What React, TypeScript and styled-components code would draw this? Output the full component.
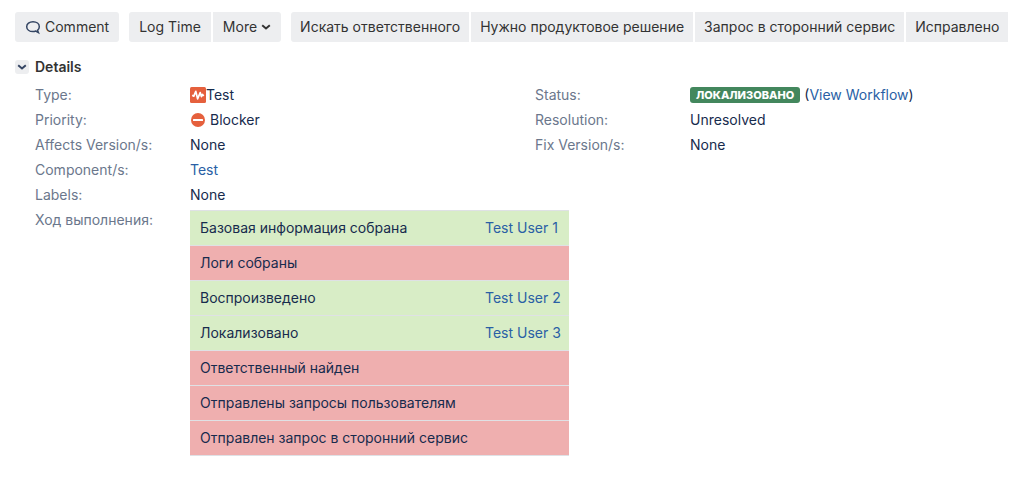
import React from "react";
import styled, { createGlobalStyle } from "styled-components";

const Global = createGlobalStyle`
  * { box-sizing: border-box; }
  body {
    margin: 0;
    background: #fff;
    color: #172b4d;
    font: 14px/20px Inter, "Liberation Sans", sans-serif;
  }
`;

const Page = styled.main`
  padding: 12px 0 24px 15px;
  overflow: hidden;
`;
const Toolbar = styled.div`
  display: flex;
  gap: 10px;
`;
const ButtonGroup = styled.div<{ $open?: boolean }>`
  display: flex;
  flex: none;
  gap: 2px;
  border-radius: ${(p) => (p.$open ? "3px 0 0 3px" : "3px")};
  overflow: hidden;
`;
const ToolButton = styled.button<{ $compact?: boolean }>`
  display: flex;
  align-items: center;
  gap: 4px;
  height: 30px;
  padding: 0 ${(p) => (p.$compact ? 9 : 10)}px;
  border: 0;
  background: #edeef0;
  color: #333;
  font: inherit;
  white-space: nowrap;
`;
const SectionHead = styled.header`
  display: flex;
  align-items: center;
  gap: 6px;
  margin-top: 15px;
`;
const Toggle = styled.button`
  display: flex;
  align-items: center;
  justify-content: center;
  width: 14px;
  height: 14px;
  padding: 0;
  border: 0;
  border-radius: 3px;
  background: #edeef0;
  color: #344563;
`;
const Title = styled.h2`
  margin: 0;
  color: #333;
  font-size: 14px;
  font-weight: 600;
`;
const Columns = styled.div`
  display: grid;
  grid-template-columns: minmax(0, 20fr) minmax(0, 19fr);
  padding-left: 20px;
  margin-top: 8px;
`;
const Fields = styled.dl`
  margin: 0;
`;
const Field = styled.div`
  display: grid;
  grid-template-columns: 155px minmax(0, 1fr);
  margin-bottom: 5px;
`;
const Label = styled.dt`
  color: #6b778c;
`;
const Value = styled.dd<{ $gap?: number }>`
  display: flex;
  align-items: center;
  gap: ${(p) => p.$gap ?? 0}px;
  margin: 0;
  white-space: nowrap;
`;
const Link = styled.a`
  color: #2a5fa5;
  text-decoration: none;
`;
const Lozenge = styled.span`
  padding: 0 6px;
  border-radius: 3px;
  background: #43875d;
  color: #fff;
  font-size: 11px;
  font-weight: 800;
  line-height: 16px;
`;
const Progress = styled.table`
  flex: none;
  width: 379px;
  table-layout: fixed;
  border-collapse: collapse;
`;
const Step = styled.tr<{ $done: boolean }>`
  height: 35px;
  background: ${(p) => (p.$done ? "#d8edc6" : "#efafaf")};
`;
const Cell = styled.td`
  padding: 7px 0 7px 10px;
  border-top: 1px solid #dfe1e5;
  border-bottom: 1px solid #dfe1e5;
`;

const Chevron = ({ size }: { size: number }) => (
  <svg width={size} height={size} viewBox="0 0 10 10" fill="none" stroke="currentColor" strokeWidth="2" aria-hidden="true">
    <path d="M1.200 3.200 5 6.400 8.800 3.200" />
  </svg>
);
const CommentIcon = () => (
  <svg width="16" height="16" viewBox="0 0 16 16" fill="none" stroke="#344563" strokeWidth="1.5" aria-hidden="true">
    <path d="M10.700 12C9.900 12.400 9 12.600 8 12.600 4.400 12.600 1.700 10.500 1.700 7.700S4.400 2.800 8 2.800s6.300 2.100 6.300 4.900c0 1.500-.7 2.700-1.800 3.600l.9 2.300z" />
  </svg>
);
const TestIcon = () => (
  <svg width="16" height="16" viewBox="0 0 16 16" aria-hidden="true">
    <rect width="16" height="16" rx="1.500" fill="#e5603d" />
    <path d="M2.200 8.200 3.800 9.200 5.800 4.400 7.600 11.800 10.200 5.600 11.400 9.600 12.400 7.400 13.700 9" fill="none" stroke="#fff" strokeWidth="1.700" strokeLinejoin="round" />
  </svg>
);
const BlockerIcon = () => (
  <svg width="16" height="16" viewBox="0 0 16 16" aria-hidden="true">
    <circle cx="8" cy="8" r="7" fill="#e5603d" />
    <rect x="3" y="7" width="10" height="2" rx=".5" fill="#fff" />
  </svg>
);

const transitions = ["Искать ответственного", "Нужно продуктовое решение", "Запрос в сторонний сервис", "Исправлено"];
const steps = [
  { name: "Базовая информация собрана", user: "Test User 1" },
  { name: "Логи собраны" },
  { name: "Воспроизведено", user: "Test User 2" },
  { name: "Локализовано", user: "Test User 3" },
  { name: "Ответственный найден" },
  { name: "Отправлены запросы пользователям" },
  { name: "Отправлен запрос в сторонний сервис" },
];

export default function App() {
  return (
    <Page>
      <Global />
      <Toolbar>
        <ButtonGroup>
          <ToolButton><CommentIcon />Comment</ToolButton>
        </ButtonGroup>
        <ButtonGroup>
          <ToolButton>Log Time</ToolButton>
          <ToolButton>More <Chevron size={10} /></ToolButton>
        </ButtonGroup>
        <ButtonGroup $open>
          {transitions.map((t) => <ToolButton key={t} $compact>{t}</ToolButton>)}
        </ButtonGroup>
      </Toolbar>
      <section>
        <SectionHead>
          <Toggle aria-label="Toggle details"><Chevron size={10} /></Toggle>
          <Title>Details</Title>
        </SectionHead>
        <Columns>
          <Fields>
            <Field><Label>Type:</Label><Value><TestIcon />Test</Value></Field>
            <Field><Label>Priority:</Label><Value $gap={4}><BlockerIcon />Blocker</Value></Field>
            <Field><Label>Affects Version/s:</Label><Value>None</Value></Field>
            <Field><Label>Component/s:</Label><Value><Link href="#component">Test</Link></Value></Field>
            <Field><Label>Labels:</Label><Value>None</Value></Field>
            <Field>
              <Label>Ход выполнения:</Label>
              <Value>
                <Progress>
                  <colgroup>
                    <col />
                    <col width="94" />
                  </colgroup>
                  <tbody>
                    {steps.map((s) => (
                      <Step key={s.name} $done={!!s.user}>
                        <Cell>{s.name}</Cell>
                        <Cell>{s.user && <Link href="#user">{s.user}</Link>}</Cell>
                      </Step>
                    ))}
                  </tbody>
                </Progress>
              </Value>
            </Field>
          </Fields>
          <Fields>
            <Field>
              <Label>Status:</Label>
              <Value $gap={4}>
                <Lozenge>ЛОКАЛИЗОВАНО</Lozenge>
                <span>(<Link href="#workflow">View Workflow</Link>)</span>
              </Value>
            </Field>
            <Field><Label>Resolution:</Label><Value>Unresolved</Value></Field>
            <Field><Label>Fix Version/s:</Label><Value>None</Value></Field>
          </Fields>
        </Columns>
      </section>
    </Page>
  );
}
